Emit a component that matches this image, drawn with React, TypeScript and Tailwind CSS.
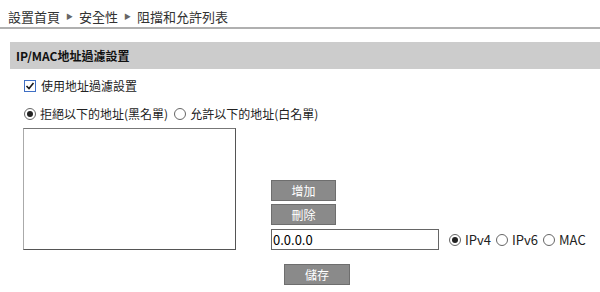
import React from "react";

const font = { fontFamily: '"Noto Sans CJK TC", "Noto Sans", sans-serif' };

const Radio = ({ checked }: { checked?: boolean }) => (
  <span className="inline-flex items-center justify-center w-[12px] h-[12px] rounded-full border border-[#666] bg-white mr-[4px]">
    {checked && <span className="w-[6px] h-[6px] rounded-full bg-[#222]" />}
  </span>
);

const GrayButton = ({ label, className }: { label: string; className?: string }) => (
  <button
    type="button"
    className={`h-[21px] w-[65px] bg-[#8a8a8a] border border-[#6e6e6e] text-white text-[12px] leading-none ${className ?? ""}`}
  >
    {label}
  </button>
);

const App = () => {
  return (
    <div className="w-[600px] h-[292px] bg-white text-[#222] text-[12px] overflow-hidden" style={font}>
      <div className="h-[29px] flex items-center pl-[8px] text-[13px] text-[#333] border-b-2 border-[#b0b0b0] pt-[6px]">
        設置首頁 <span className="text-[7px] text-[#666] mx-[6px]">▶</span> 安全性{" "}
        <span className="text-[7px] text-[#666] mx-[6px]">▶</span> 阻擋和允許列表
      </div>

      <div className="mt-[13px] ml-[10px] h-[27px] bg-[#cccccc] flex items-center pl-[6px] font-bold text-[12px] text-[#111]">
        IP/MAC地址過濾設置
      </div>

      <div className="pl-[24px] pt-[8px] flex items-center h-[26px]">
        <span className="w-[12px] h-[12px] border border-[#3f6fc4] bg-white mr-[5px] flex items-center justify-center">
          <svg width="10" height="10" viewBox="0 0 10 10">
            <path d="M1.5 5 L4 7.5 L8.5 2" fill="none" stroke="#1a1a1a" strokeWidth="1.6" />
          </svg>
        </span>
        <span>使用地址過濾設置</span>
      </div>

      <div className="pl-[24px] flex items-center h-[22px] mt-[8px]">
        <Radio checked />
        <span className="mr-[6px]">拒絕以下的地址(黑名單)</span>
        <Radio />
        <span>允許以下的地址(白名單)</span>
      </div>

      <div className="flex items-end pl-[23px] mt-[3px]">
        <div className="w-[213px] h-[122px] border border-[#555] border-l-[#aaa] border-t-[#777] bg-white" />
        <div className="ml-[35px] flex flex-col gap-[3px]">
          <GrayButton label="增加" />
          <GrayButton label="刪除" />
          <div className="flex items-center mt-[1px]">
            <input
              type="text"
              defaultValue="0.0.0.0"
              className="w-[168px] h-[21px] border border-[#666] px-[1px] text-[13px] text-black outline-none"
              style={font}
            />
            <div className="flex items-center ml-[10px] text-[13px]">
              <Radio checked />
              <span className="mr-[5px]">IPv4</span>
              <Radio />
              <span className="mr-[5px]">IPv6</span>
              <Radio />
              <span>MAC</span>
            </div>
          </div>
        </div>
      </div>

      <div className="pl-[284px] mt-[14px]">
        <GrayButton label="儲存" className="w-[66px]" />
      </div>
    </div>
  );
};

export default App;
